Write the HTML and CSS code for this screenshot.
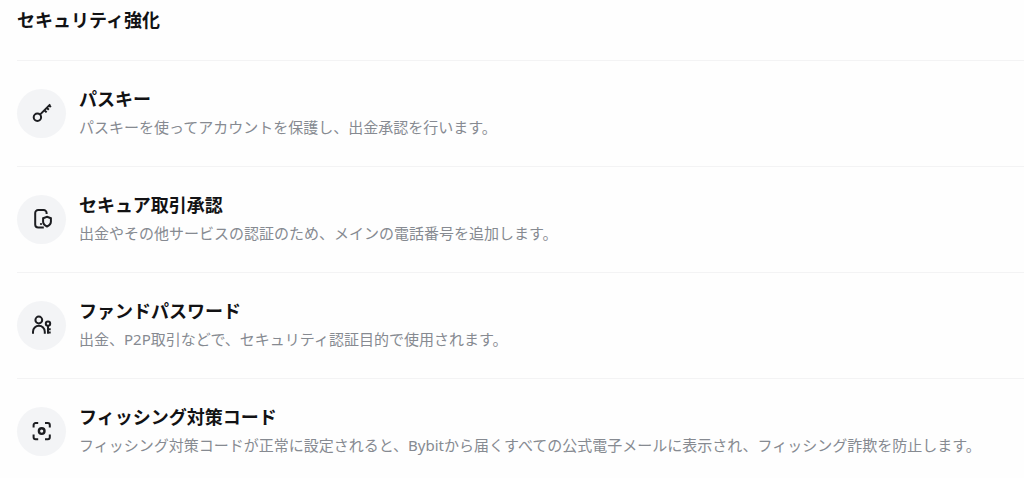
FILE: index.html
```html
<!DOCTYPE html>
<html lang="ja">
<head>
<meta charset="utf-8">
<meta name="viewport" content="width=device-width, initial-scale=1">
<title>セキュリティ強化</title>
<link rel="stylesheet" href="styles.css">
</head>
<body>
<main class="security">
<h1 class="security-title">セキュリティ強化</h1>
<ul class="list">
<li class="item">
<span class="icon"><svg viewBox="0 0 24 24" aria-hidden="true"><circle cx="7.4" cy="16.200" r="3.700"/><path d="M10 13.600 20.200 3.400M18.800 3.800l2 2.400M16.600 6.600l2.200 2.200M14.200 9l2.400 2.400"/></svg></span>
<div class="text"><h2 class="name">パスキー</h2><p class="desc">パスキーを使ってアカウントを保護し、出金承認を行います。</p></div>
</li>
<li class="item">
<span class="icon"><svg viewBox="0 0 24 24" aria-hidden="true"><path d="M16.600 7V6a3 3 0 0 0-3-3H8.200a3 3 0 0 0-3 3v11.500a3 3 0 0 0 3 3h5.600M17 9.800l3.900 1.400v3.600c0 2.200-1.600 3.700-3.900 4.700-2.300-1-3.900-2.500-3.900-4.700v-3.600Z"/><circle class="dot" cx="11" cy="17" r="1.100"/></svg></span>
<div class="text"><h2 class="name">セキュア取引承認</h2><p class="desc">出金やその他サービスの認証のため、メインの電話番号を追加します。</p></div>
</li>
<li class="item">
<span class="icon"><svg viewBox="0 0 24 24" aria-hidden="true"><circle cx="8.800" cy="7" r="3.400"/><path d="M3 20.700v-2a5.900 5.900 0 0 1 11.800 0v2M18 12.900v7.800M18 16.200h2.700M18 19.500h2.700"/><circle cx="18" cy="10.600" r="2.200"/></svg></span>
<div class="text"><h2 class="name">ファンドパスワード</h2><p class="desc">出金、P2P取引などで、セキュリティ認証目的で使用されます。</p></div>
</li>
<li class="item">
<span class="icon"><svg viewBox="0 0 24 24" aria-hidden="true"><path d="M8.200 4H5.600a2 2 0 0 0-2 2v2.600M15 4h2.800a2 2 0 0 1 2 2v2.600M19.800 15.600v2.600a2 2 0 0 1-2 2H15M8.200 20.200H5.600a2 2 0 0 1-2-2v-2.600"/><circle class="lens" cx="11.700" cy="12.100" r="2.800"/></svg></span>
<div class="text"><h2 class="name">フィッシング対策コード</h2><p class="desc">フィッシング対策コードが正常に設定されると、Bybitから届くすべての公式電子メールに表示され、フィッシング詐欺を防止します。</p></div>
</li>
</ul>
</main>
</body>
</html>
```
FILE: styles.css
```css
* { box-sizing: border-box; }

body {
  margin: 0;
  background: #fefefe;
  color: #121214;
  font-family: "Noto Sans", "Noto Sans CJK JP", sans-serif;
}

.security { padding: 8px 0 0 17px; }

.security-title {
  margin: 0 0 27px;
  font-size: 18px;
  line-height: 25px;
  font-weight: 700;
}

.list { list-style: none; margin: 0; padding: 0; }

.item {
  display: flex;
  align-items: center;
  gap: 13px;
  border-top: 1px solid #f3f3f4;
  padding: 24px 0 25px;
}

.item:last-child { padding-bottom: 12px; }

.icon {
  display: flex;
  align-items: center;
  justify-content: center;
  flex: none;
  width: 49px;
  height: 49px;
  border-radius: 50%;
  background: #f3f4f6;
}

.icon svg {
  width: 24px;
  height: 24px;
  fill: none;
  stroke: #1c1d21;
  stroke-width: 2;
}

.icon .dot { fill: #1c1d21; stroke: none; }
.icon .lens { stroke-width: 2.4; }

.name {
  margin: 0;
  font-size: 18px;
  line-height: 28px;
  font-weight: 700;
}

.desc {
  margin: 0;
  font-size: 15px;
  line-height: 28px;
  color: #868a91;
}
```
